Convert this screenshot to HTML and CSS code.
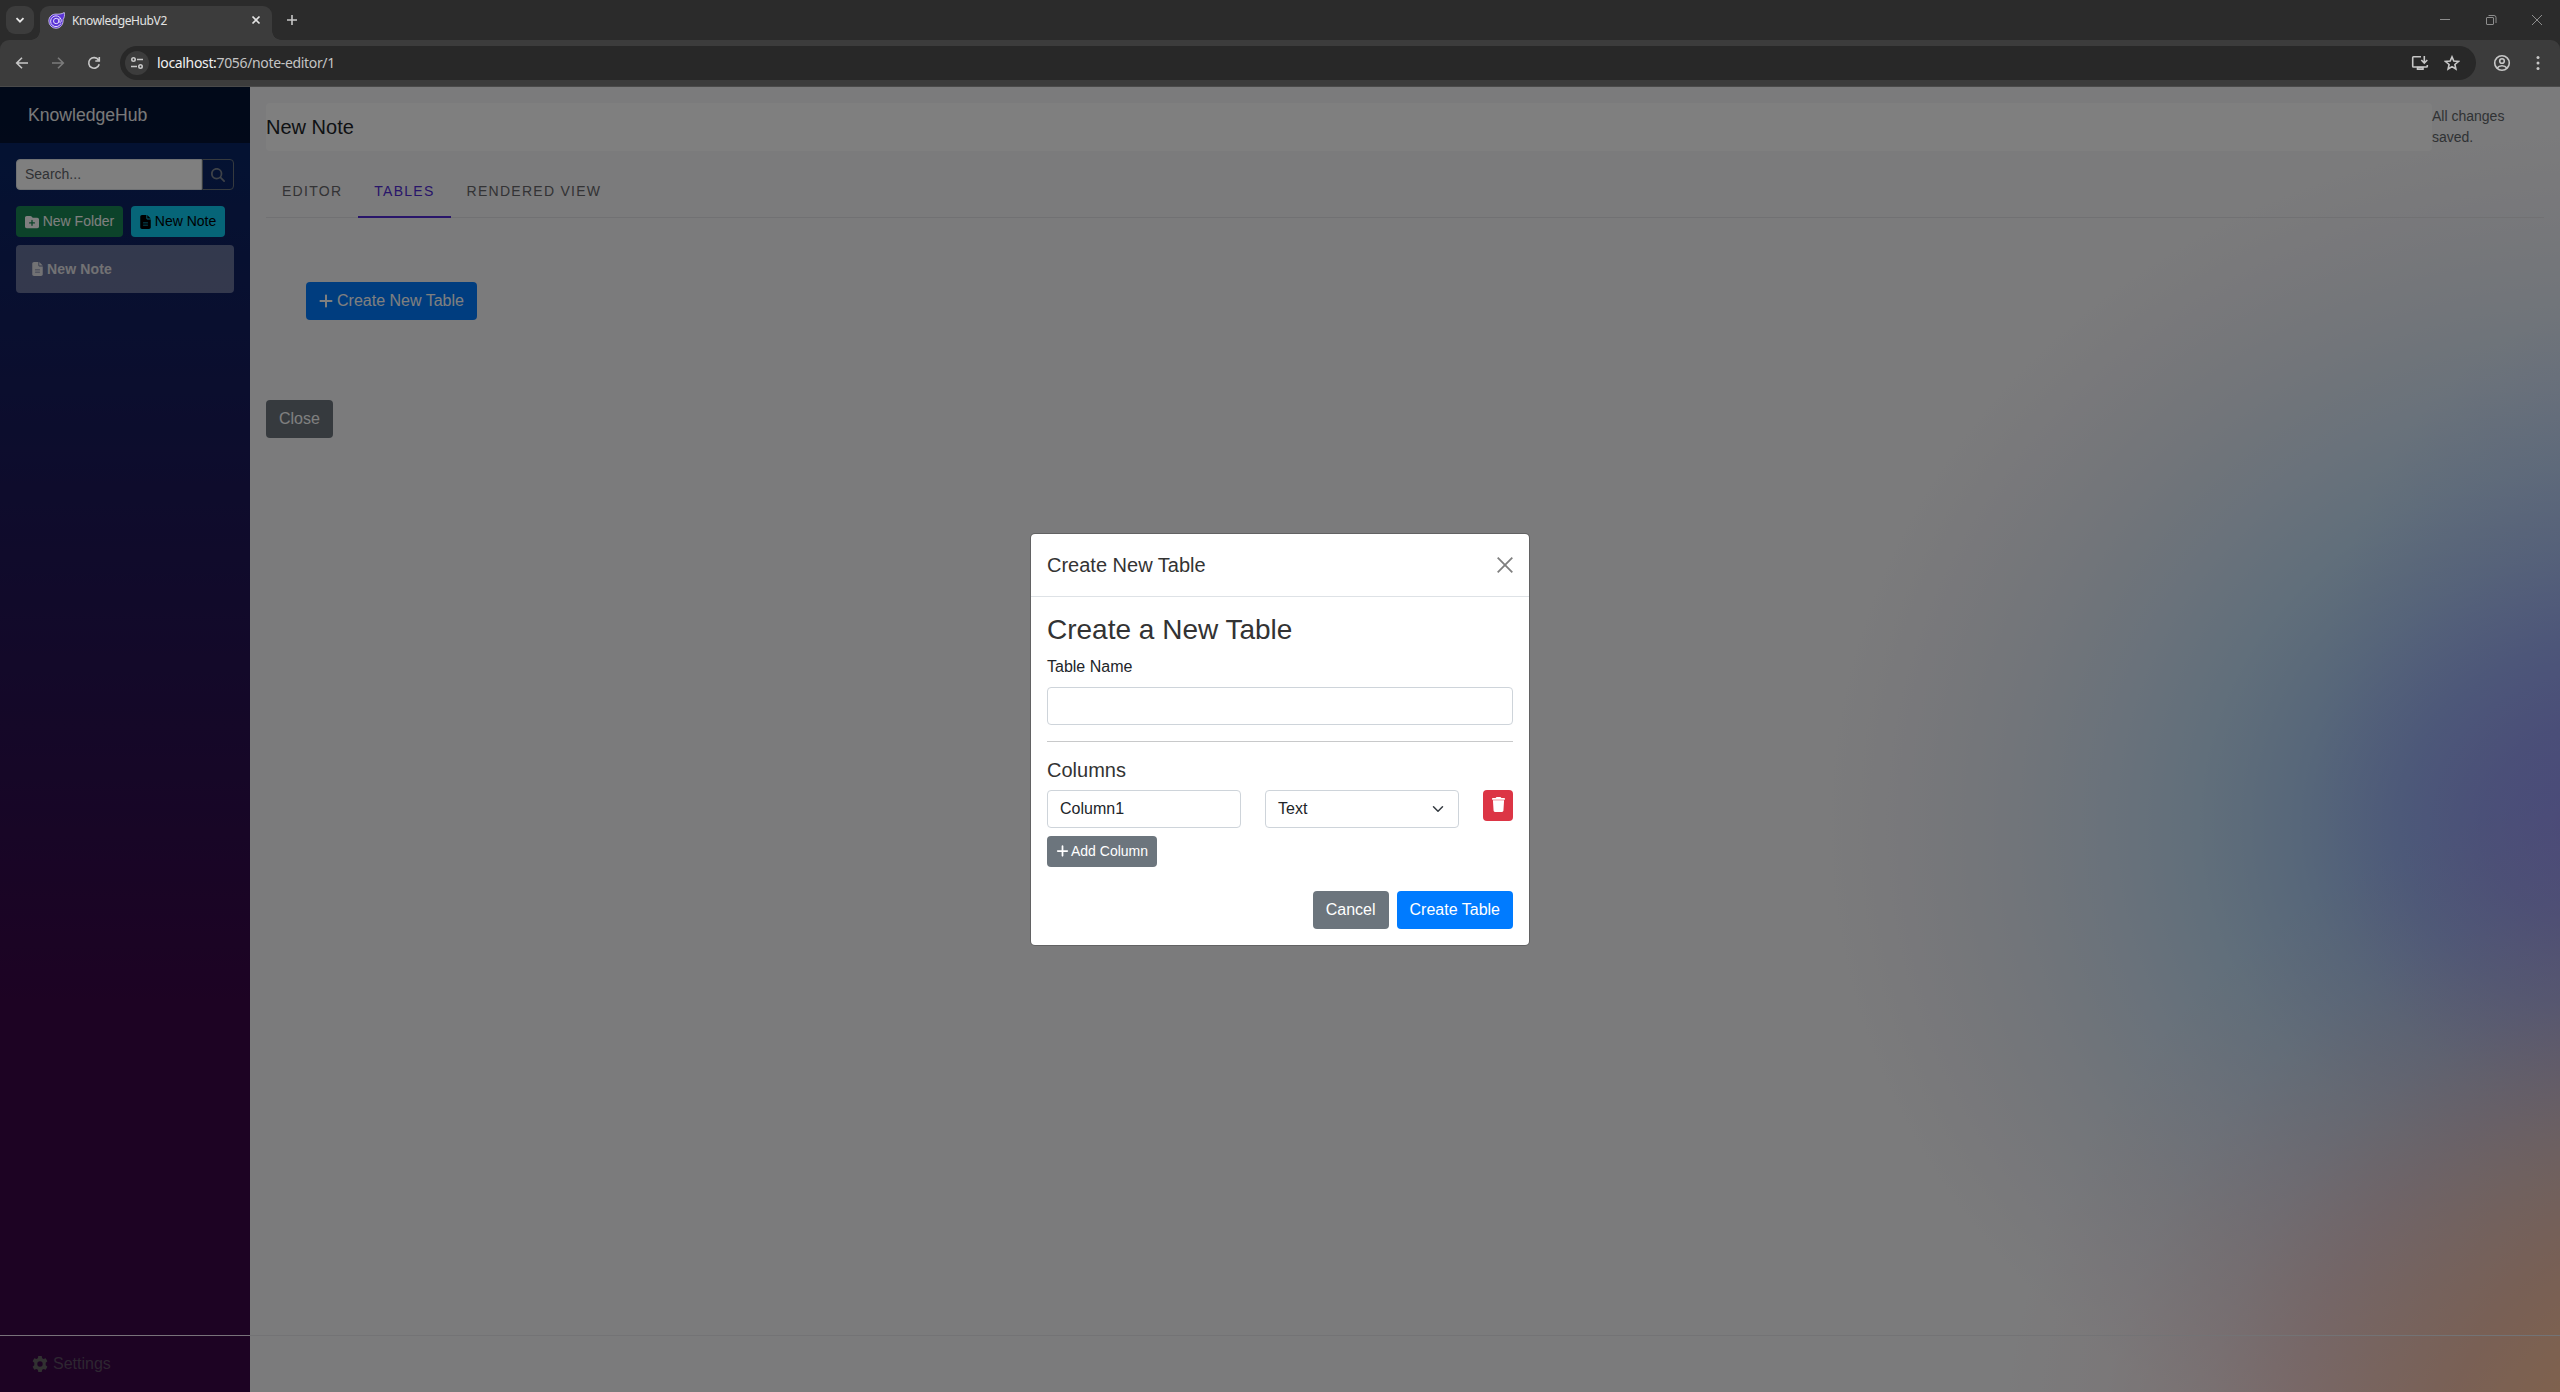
FILE: index.html
```html
<!DOCTYPE html>
<html lang="en">
<head>
<meta charset="utf-8">
<title>KnowledgeHubV2</title>
<link rel="stylesheet" href="styles.css">
</head>
<body>
<svg class="defs" aria-hidden="true">
  <symbol id="plus" viewBox="0 0 448 512"><path d="M256 80c0-17.700-14.300-32-32-32s-32 14.300-32 32V224H48c-17.700 0-32 14.300-32 32s14.300 32 32 32H192V432c0 17.700 14.300 32 32 32s32-14.300 32-32V288H400c17.700 0 32-14.300 32-32s-14.300-32-32-32H256V80z"/></symbol>
  <symbol id="file" viewBox="0 0 384 512"><path fill-rule="evenodd" d="M64 0C28.700 0 0 28.700 0 64V448c0 35.300 28.700 64 64 64H320c35.300 0 64-28.700 64-64V160H256c-17.700 0-32-14.300-32-32V0H64zM256 0V128H384L256 0zM112 272H272c8.800 0 16 7.200 16 16s-7.200 16-16 16H112c-8.800 0-16-7.200-16-16s7.200-16 16-16zm0 80H272c8.800 0 16 7.200 16 16s-7.200 16-16 16H112c-8.800 0-16-7.200-16-16s7.200-16 16-16z"/></symbol>
</svg>

<header class="chrome">
  <div class="tabstrip">
    <span class="tab-search"><svg width="10" height="10" viewBox="0 0 10 10"><path d="M1.500 3.200 5 6.700l3.500-3.500"/></svg></span>
    <div class="tab">
      <svg class="favicon" width="17" height="17" viewBox="0 0 17 17"><path class="fav-bg" d="M16.300.5c.6 3-.1 5.300-1.200 7.100.5 4.500-2.500 8.700-7 8.700A7.300 7.300 0 0 1 .8 9c0-4.200 3.300-7 7.200-6.900 2.500.1 5.500.2 8.300-1.600z"/><path class="fav-line" d="M12.900 11.500A5.400 5.400 0 1 1 13 7.200c.6 1.700.2 3.200-.9 3.200-1 0-1-1-1-2v-2M10.900 9a2.700 2.700 0 1 1-5.400 0 2.700 2.700 0 0 1 5.400 0z"/></svg>
      <span class="tab-title">KnowledgeHubV2</span>
      <svg class="tab-close" width="10" height="10" viewBox="0 0 10 10"><path d="m1.500 1.500 7 7m0-7-7 7"/></svg>
    </div>
    <svg class="tab-new" width="12" height="12" viewBox="0 0 12 12"><path d="M6 1v10M1 6h10"/></svg>
    <div class="window-buttons">
      <svg width="12" height="12" viewBox="0 0 12 12"><path d="M1 5.500h10"/></svg>
      <svg width="12" height="12" viewBox="0 0 12 12"><path d="M1.500 4q0-.5.500-.5h6q.5 0 .5.500v6q0 .5-.5.500h-6q-.5 0-.5-.5zM3.500 1.500h5.500q2 0 2 2v5.500"/></svg>
      <svg width="12" height="12" viewBox="0 0 12 12"><path d="m1 1 10 10m0-10L1 11"/></svg>
    </div>
  </div>
  <div class="toolbar">
    <div class="nav-buttons">
      <svg width="16" height="16" viewBox="0 0 16 16"><path d="M14 8H3m5-5.300L2.700 8 8 13.300"/></svg>
      <svg class="dim" width="16" height="16" viewBox="0 0 16 16"><path d="M2 8h11M8 2.700 13.300 8 8 13.300"/></svg>
      <svg width="16" height="16" viewBox="0 0 16 16"><path d="M13.200 9.200A5.300 5.300 0 1 1 12.500 5M13.300 2v4H9.300"/></svg>
    </div>
    <div class="omnibox">
      <span class="site-info"><svg width="14" height="14" viewBox="0 0 14 14"><circle cx="3.500" cy="3.500" r="1.700"/><circle cx="10.500" cy="10.500" r="1.700"/><path d="M7 3.500h6M1 10.500h6"/></svg></span>
      <span class="url">localhost:<span>7056/note-editor/1</span></span>
      <svg class="install" width="18" height="16" viewBox="0 0 18 16"><path d="M10 1.800H2.500q-.8 0-.8.8v8.600q0 .8.800.8h13q.8 0 .8-.8V10M13.300 1v6.500M10.300 5l3 3 3-3"/><path d="M6.500 12.500h5.500v1.800H6.500z"/></svg>
      <svg width="16" height="16" viewBox="0 0 16 16"><path d="m8 1.900 1.800 4.200 4.600.4-3.500 3 1 4.500L8 11.600 4.100 14l1-4.500-3.500-3 4.600-.4z"/></svg>
    </div>
    <svg class="profile" width="18" height="18" viewBox="0 0 18 18"><circle cx="9" cy="9" r="7.300"/><circle cx="9" cy="7" r="2.300"/><path d="M4.200 14c1.200-1.700 3-2.200 4.800-2.200s3.600.5 4.800 2.200"/></svg>
    <svg class="menu" width="4" height="16" viewBox="0 0 4 16"><circle cx="2" cy="2.500" r="1.500"/><circle cx="2" cy="8" r="1.500"/><circle cx="2" cy="13.500" r="1.500"/></svg>
  </div>
</header>

<div class="page">
  <aside class="sidebar">
    <div class="brand">KnowledgeHub</div>
    <div class="tools">
      <div class="search">
        <input class="search-input" type="text" placeholder="Search...">
        <button class="search-btn"><svg width="14" height="14" viewBox="0 0 512 512"><path d="M416 208c0 45.900-14.900 88.300-40 122.700L502.600 457.400c12.500 12.500 12.500 32.800 0 45.300s-32.800 12.500-45.300 0L330.700 376c-34.400 25.200-76.800 40-122.700 40C93.100 416 0 322.900 0 208S93.100 0 208 0S416 93.100 416 208zM208 352a144 144 0 1 0 0-288 144 144 0 1 0 0 288z"/></svg></button>
      </div>
      <div class="actions">
        <button class="btn btn-sm btn-success"><svg width="14" height="14" viewBox="0 0 512 512"><path fill-rule="evenodd" d="M512 416c0 35.300-28.700 64-64 64H64c-35.300 0-64-28.700-64-64V96C0 60.700 28.700 32 64 32H192c20.100 0 39.100 9.500 51.200 25.600l19.200 25.600c6 8.100 15.500 12.800 25.600 12.800H448c35.300 0 64 28.700 64 64V416zM232 376c0 13.300 10.700 24 24 24s24-10.700 24-24V312h64c13.300 0 24-10.700 24-24s-10.700-24-24-24H280V200c0-13.300-10.700-24-24-24s-24 10.700-24 24v64H168c-13.300 0-24 10.700-24 24s10.700 24 24 24h64v64z"/></svg>New Folder</button>
        <button class="btn btn-sm btn-info"><svg width="11" height="14"><use href="#file"/></svg>New Note</button>
      </div>
      <div class="note-item"><svg width="11" height="14"><use href="#file"/></svg>New Note</div>
    </div>
    <div class="settings"><svg width="16" height="16" viewBox="0 0 16 16"><path fill-rule="evenodd" d="M6.300 0h3.400l.5 2.200 1.300.8 2.200-.7 1.700 2.900-1.700 1.500v2.600l1.700 1.500-1.700 2.900-2.200-.7-1.300.8-.5 2.200H6.300l-.5-2.200-1.300-.8-2.200.7-1.700-2.900 1.700-1.500V6.700L.6 5.200l1.700-2.900 2.200.7 1.300-.8zM8 5.300a2.700 2.700 0 1 0 0 5.400 2.700 2.700 0 0 0 0-5.400z"/></svg>Settings</div>
  </aside>

  <main class="main">
    <div class="content">
      <div class="title-row">
        <input class="title-input" type="text" value="New Note">
        <div class="status">All changes saved.</div>
      </div>
      <nav class="tabs">
        <span class="tab-link">EDITOR</span>
        <span class="tab-link active">TABLES</span>
        <span class="tab-link">RENDERED VIEW</span>
      </nav>
      <div class="tab-panel">
        <button class="btn btn-primary"><svg width="14" height="16"><use href="#plus"/></svg>Create New Table</button>
      </div>
      <button class="btn btn-secondary close-note">Close</button>
    </div>
    <footer class="footer"></footer>
  </main>

  <div class="backdrop">
    <section class="modal">
      <div class="modal-header">
        <h5>Create New Table</h5>
        <svg width="16" height="16" viewBox="0 0 16 16"><path d="m.7.700 14.600 14.600m0-14.600L.7 15.300"/></svg>
      </div>
      <div class="modal-body">
        <h3>Create a New Table</h3>
        <label class="label">Table Name</label>
        <input class="control" type="text">
        <hr>
        <h5 class="columns-title">Columns</h5>
        <div class="column-row">
          <input class="control" type="text" value="Column1">
          <div class="control select">Text<svg width="16" height="12" viewBox="0 0 16 16"><path d="m2 5 6 6 6-6"/></svg></div>
          <button class="btn btn-sm btn-danger"><svg width="13" height="15" viewBox="0 0 448 512"><path d="M135.200 17.700C140.600 6.800 151.700 0 163.800 0H284.200c12.100 0 23.200 6.800 28.600 17.700L320 32h96c17.700 0 32 14.300 32 32s-14.300 32-32 32H32C14.300 96 0 81.700 0 64S14.300 32 32 32h96l7.200-14.300zM32 112H416L394 466c-1.600 26-22 46-48 46H102c-26 0-46.400-20-48-46z"/></svg></button>
        </div>
        <button class="btn btn-sm btn-secondary add-column"><svg width="13" height="14"><use href="#plus"/></svg>Add Column</button>
        <div class="modal-actions">
          <button class="btn btn-secondary">Cancel</button>
          <button class="btn btn-primary">Create Table</button>
        </div>
      </div>
    </section>
  </div>
</div>
</body>
</html>
```

FILE: styles.css
```css
* { box-sizing: border-box; }

html, body { height: 100%; margin: 0; }

body {
  display: flex;
  flex-direction: column;
  overflow: hidden;
  font: 16px/1.5 "Liberation Sans", Arial, sans-serif;
  color: #212529;
}

svg { flex: none; }
.defs { display: none; }
input, button { font-family: inherit; margin: 0; }

/* Browser frame */
.chrome {
  height: 87px;
  flex: none;
  background: #2b2b2b;
  font-family: "Noto Sans", sans-serif;
  color: #e3e3e3;
}
.chrome svg { fill: none; stroke: #c7c7c7; stroke-width: 1.600; }

.tabstrip { display: flex; align-items: center; height: 40px; padding-left: 6px; }
.tab-search {
  width: 28px; height: 28px;
  display: grid; place-items: center;
  border-radius: 9px;
  background: #3c3c3c;
}
.chrome .tab-search svg { stroke: #e8e8e8; stroke-width: 1.800; }
.tab {
  position: relative;
  display: flex;
  align-items: center;
  align-self: flex-end;
  width: 232px; height: 34px;
  margin-left: 6px;
  padding: 0 11px 6px 8px;
  border-radius: 9px 9px 0 0;
  background: #3c3c3c;
}
.tab::before, .tab::after {
  content: "";
  position: absolute;
  bottom: 0;
  width: 9px; height: 9px;
}
.tab::before { left: -9px; background: radial-gradient(circle at 0 0, transparent 8.500px, #3c3c3c 9px); }
.tab::after { right: -9px; background: radial-gradient(circle at 100% 0, transparent 8.500px, #3c3c3c 9px); }
.chrome .fav-bg { fill: #5b34d6; stroke: #d9d0f7; stroke-width: .8; }
.chrome .fav-line { stroke: #e4dcfb; stroke-width: 1; }
.tab-title { margin-left: 7px; padding-top: 1px; font-size: 12px; line-height: 16px; flex: 1; letter-spacing: -.4px; }
.chrome .tab-close { stroke: #e3e3e3; stroke-width: 1.700; }
.tab-new { margin-left: 14px; }
.window-buttons { display: flex; gap: 34px; margin-left: auto; padding-right: 17px; }
.chrome .window-buttons svg { stroke: #8d8d8d; stroke-width: 1; }

.toolbar {
  display: flex;
  align-items: center;
  height: 47px;
  padding: 0 20px 1px 14px;
  border-radius: 9px 9px 0 0;
  border-bottom: 1px solid #4a4a4a;
  background: #3c3c3c;
}
.nav-buttons { display: flex; gap: 20px; }
.chrome .nav-buttons .dim { stroke: #7b7b7b; }
.omnibox {
  flex: 1;
  display: flex;
  align-items: center;
  height: 34px;
  margin-left: 18px;
  padding: 0 16px 0 5px;
  border-radius: 17px;
  background: #282828;
}
.site-info {
  width: 24px; height: 24px;
  display: grid; place-items: center;
  border-radius: 50%;
  background: #3c3c3c;
}
.url { flex: 1; margin-left: 8px; padding-top: 1px; font-size: 14px; line-height: 20px; letter-spacing: -.34px; color: #f0f0f0; }
.url span { color: #c4c4c4; }
.install { margin-right: 15px; }
.profile { margin-left: 17px; }
.chrome .menu { margin-left: 25px; fill: #c7c7c7; stroke: none; }

/* Application */
.page { position: relative; flex: 1; display: flex; min-height: 0; }

.sidebar {
  width: 250px;
  flex: none;
  display: flex;
  flex-direction: column;
  background: linear-gradient(180deg, rgb(5, 39, 103) 0%, #3a0647 70%);
}
.brand {
  height: 56px;
  padding-left: 28px;
  background: rgba(0, 0, 0, .5);
  color: #f2f2f2;
  font-size: 17.600px;
  line-height: 56px;
}
.tools { flex: 1; padding: 16px; display: flex; flex-direction: column; }
.search { display: flex; height: 31px; margin-bottom: 16px; }
.search-input {
  flex: 1; min-width: 0;
  padding: 3px 8px 5px;
  border: 1px solid #dee2e6;
  border-radius: 4px 0 0 4px;
  background: #fff;
  font-size: 14px;
}
.search-input::placeholder { color: #5f646a; opacity: 1; }
.search-btn {
  width: 32px;
  display: grid; place-items: center;
  padding: 0;
  border: 1px solid #6c757d;
  border-radius: 0 4px 4px 0;
  background: transparent;
}
.search-btn svg { fill: #7c8490; }
.actions { display: flex; gap: 8px; margin-bottom: 8px; }

.btn {
  display: inline-flex;
  align-items: center;
  justify-content: center;
  gap: 4px;
  height: 38px;
  padding: 0 13px;
  border: 0;
  border-radius: 4px;
  color: #fff;
  fill: currentColor;
  font-size: 16px;
  line-height: 24px;
  white-space: nowrap;
}
.btn-sm { height: 31px; padding: 0 9px; gap: 4px; font-size: 14px; line-height: 21px; }
.btn-primary { background: #007bff; }
.btn-secondary { background: #6c757d; }
.btn-success { width: 107px; background: #198754; }
.btn-info { width: 94px; background: #0dcaf0; color: #000; }
.btn-danger { background: #dc3545; width: 30px; padding: 7px 0 0; align-items: flex-start; }
.add-column { gap: 2px; }

.note-item {
  display: flex;
  align-items: center;
  gap: 4px;
  height: 48px;
  padding-left: 16px;
  border-radius: 4px;
  background: rgba(255, 255, 255, .37);
  color: #e4e4e8;
  fill: currentColor;
  font-size: 14px;
  font-weight: bold;
  letter-spacing: .15px;
}
.settings {
  display: flex;
  align-items: center;
  gap: 5px;
  height: 57px;
  padding-left: 32px;
  border-top: 1px solid #f0e4f4;
  color: #5c4d62;
  fill: #626262;
}

.main {
  flex: 1;
  display: flex;
  flex-direction: column;
  background:
    radial-gradient(circle at 2450px 1393px,
      rgba(255, 196, 150, 1) 0,
      rgba(254, 194, 154, .97) 170px,
      rgba(246, 182, 152, .8) 260px,
      rgba(244, 176, 152, .62) 335px,
      rgba(242, 164, 154, .42) 415px,
      rgba(240, 160, 158, .22) 500px,
      rgba(240, 160, 168, .07) 600px,
      rgba(240, 170, 180, 0) 700px),
    radial-gradient(300px 420px at 2370px 640px,
      rgba(150, 136, 242, .34) 0,
      rgba(156, 142, 242, .2) 45%,
      rgba(170, 160, 242, 0) 100%),
    radial-gradient(770px 690px at 2350px 738px,
      rgb(148, 150, 242) 0,
      rgb(148, 164, 240) 15%,
      rgb(154, 182, 243) 26%,
      rgb(174, 206, 244) 39%,
      rgb(194, 222, 246) 52%,
      rgb(213, 229, 246) 65%,
      rgb(229, 235, 244) 78%,
      rgb(241, 241, 246) 91%,
      #f6f6f8 100%);
}
.content { flex: 1; padding: 16px; display: flex; flex-direction: column; align-items: flex-start; }
.title-row { display: flex; width: 100%; padding-right: 16px; }
.title-input {
  flex: 1;
  height: 48px;
  padding: 0;
  border: 0;
  border-radius: 4px;
  background: #fff;
  color: #212529;
  font-size: 20px;
}
.status { width: 96px; font-size: 14px; line-height: 21px; padding-top: 3px; color: #606569; }

.tabs { display: flex; align-self: stretch; height: 52px; margin-top: 15px; border-bottom: 1px solid #e2e2e6; }
.tab-link {
  height: 52px;
  padding: 0 16px;
  font-size: 14px;
  line-height: 50px;
  letter-spacing: 1.270px;
  color: #66666a;
}
.tab-link.active { border-bottom: 2px solid #512bd4; color: #512bd4; }
.tab-panel { padding: 64px 40px; }
.close-note { margin-top: 16px; }
.footer { height: 57px; border-top: 1px solid #e6e6ea; }

/* Dialog */
.backdrop {
  position: absolute;
  inset: 0;
  display: grid;
  place-items: center;
  background: rgba(0, 0, 0, .5);
}
.modal {
  width: 500px;
  border: 1px solid rgba(0, 0, 0, .2);
  border-radius: 5px;
  background: #fff;
  background-clip: padding-box;
}
.modal h3, .modal h5 { margin: 0; font-weight: normal; line-height: 1.200; color: #333; }
.modal h5 { font-size: 20px; }
.modal h3 { font-size: 28px; margin-bottom: 8px; }
.modal-header {
  display: flex;
  align-items: center;
  justify-content: space-between;
  height: 63px;
  padding: 0 16px;
  border-bottom: 1px solid #dee2e6;
}
.modal-header svg { fill: none; stroke: #7f7f7f; stroke-width: 1.800; }
.modal-body { padding: 16px; }
.label { display: block; margin-bottom: 8px; }
.control {
  display: block;
  width: 100%; height: 38px;
  padding: 6px 12px;
  border: 1px solid #ced4da;
  border-radius: 4px;
  background: #fff;
  color: #212529;
  font-size: 16px;
  line-height: 24px;
}
hr { height: 1px; margin: 16px 0; border: 0; background: #c8c9ca; }
.modal .columns-title { margin-bottom: 8px; }
.column-row { display: grid; grid-template-columns: 1fr 1fr 30px; gap: 24px; margin-bottom: 8px; }
.select { display: flex; align-items: center; justify-content: space-between; }
.select svg { fill: none; stroke: #343a40; stroke-width: 2; stroke-linecap: round; stroke-linejoin: round; }
.modal-actions { display: flex; justify-content: flex-end; gap: 8px; margin-top: 24px; }
```
